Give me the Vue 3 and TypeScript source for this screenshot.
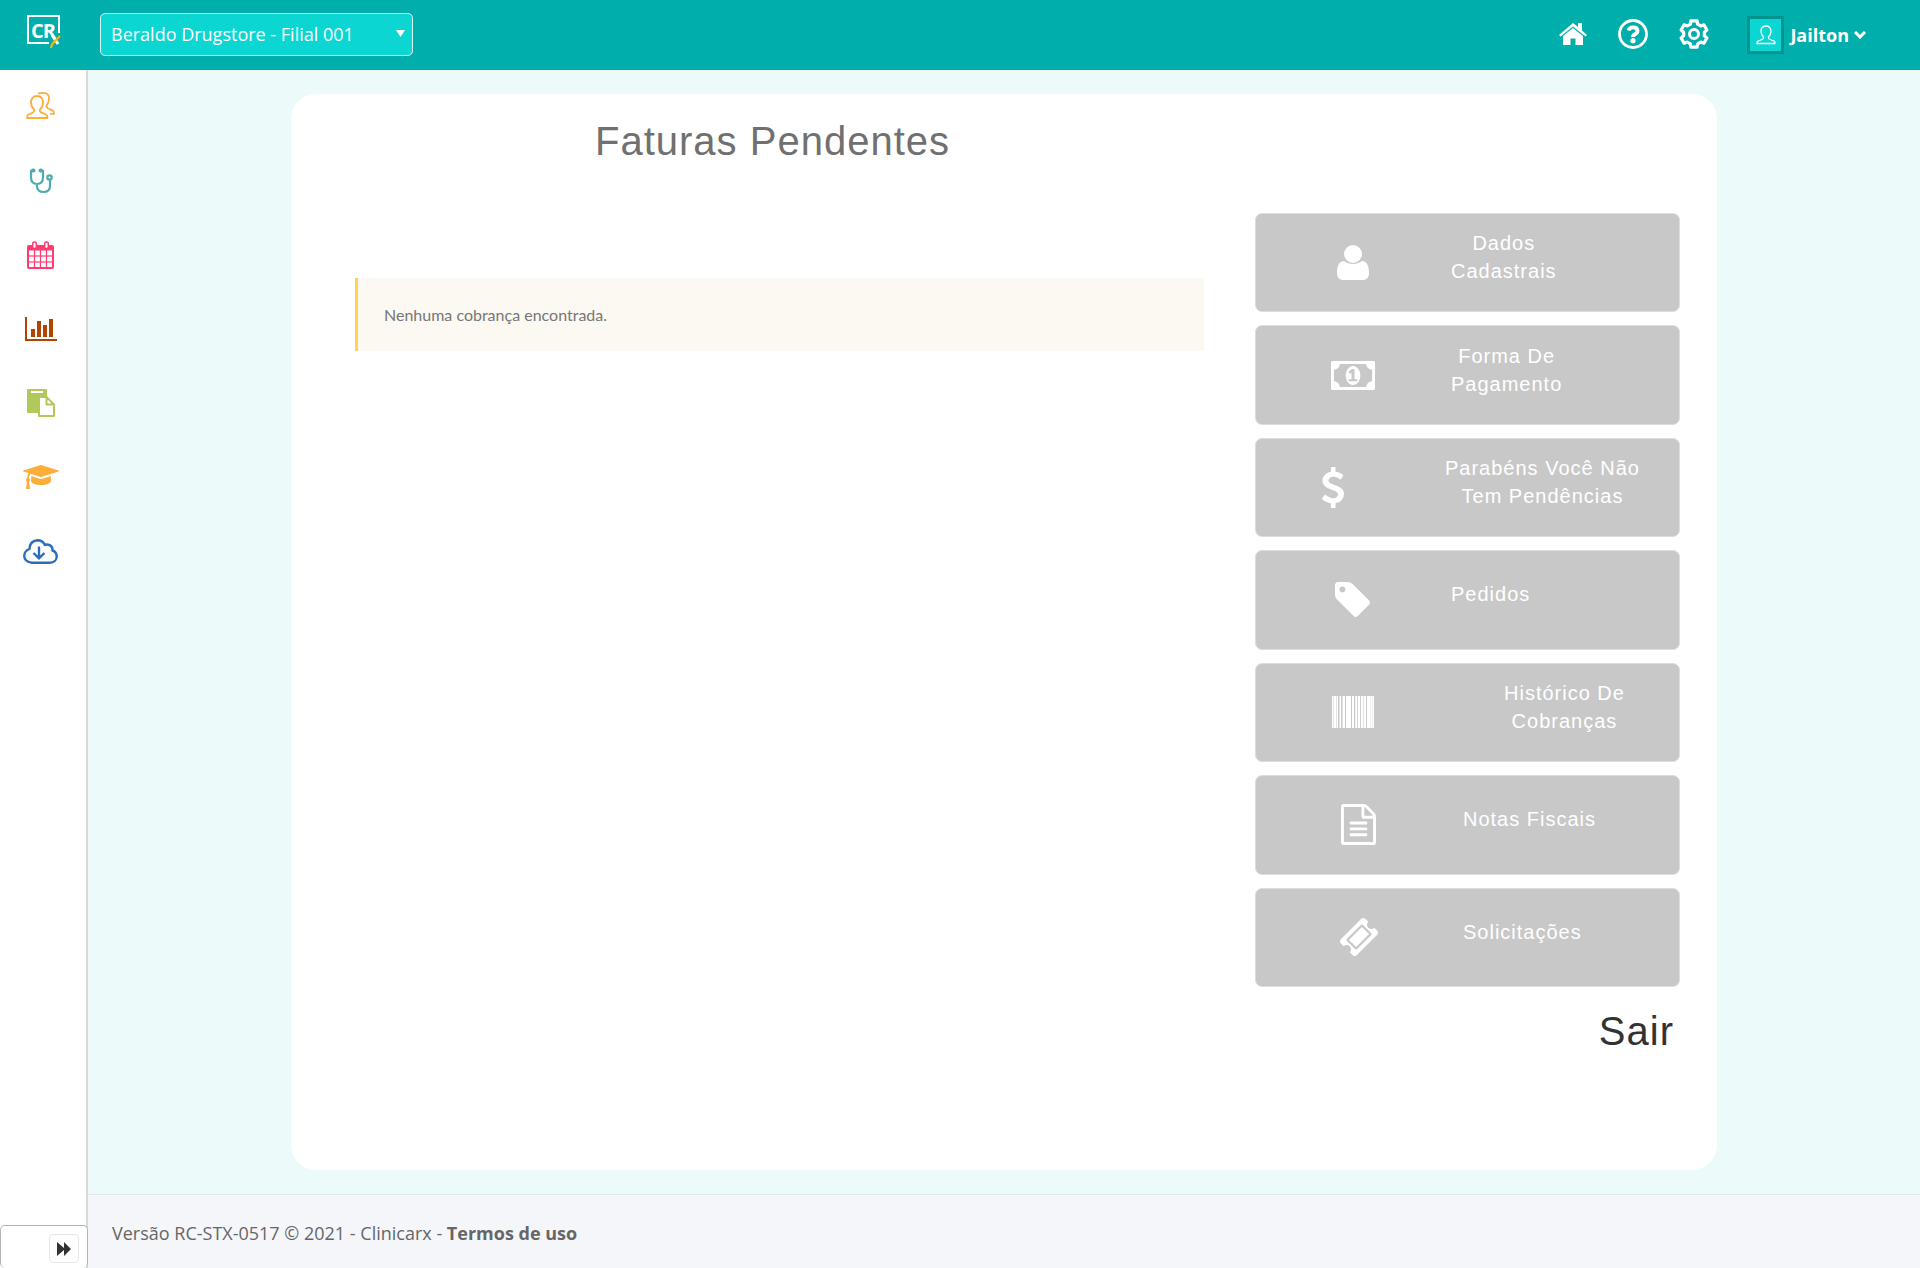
<script setup lang="ts">
import { ref } from 'vue'

interface MenuItem {
  id: string
  lines: string[]
  width: number
  height: number
  viewBox: string
  path: string
}

const branch = ref('Beraldo Drugstore - Filial 001')

const menu: MenuItem[] = [
  {
    id: 'dados', lines: ['Dados', 'Cadastrais'], width: 32, height: 35, viewBox: '0 0 32 35',
    path: 'M16 0a9 9 0 1 1 0 18a9 9 0 1 1 0-18zM7 16c5 4 13 4 18 0c5 0 7 5 7 12c0 4-2 7-6 7H6c-4 0-6-3-6-7c0-7 2-12 7-12z',
  },
  {
    id: 'forma', lines: ['Forma De', 'Pagamento'], width: 44, height: 29, viewBox: '-64 256 1920 1280',
    path: 'M704 1152h384v-96h-128v-448h-114l-148 137 77 80q42-37 55-57h2v288h-128v96zm512-256q0 70-21 142t-59.5 134-101.5 101-138 39-138-39-101.5-101-59.5-134-21-142 21-142 59.5-134 101.5-101 138-39 138 39 101.5 101 59.5 134 21 142zm512 256v-512q-106 0-181-75t-75-181h-1152q0 106-75 181t-181 75v512q106 0 181 75t75 181h1152q0-106 75-181t181-75zm128-832v1152q0 26-19 45t-45 19h-1792q-26 0-45-19t-19-45v-1152q0-26 19-45t45-19h1792q26 0 45 19t19 45z',
  },
  {
    id: 'pendencias', lines: ['Parabéns Você Não', 'Tem Pendências'], width: 22, height: 41, viewBox: '432 0 930 1792',
    path: 'M1362 1185q0 153-99.5 263.5t-258.5 136.5v175q0 14-9 23t-23 9h-135q-13 0-22.5-9.5t-9.5-22.5v-175q-66-9-127.5-31t-101.5-44.5-74-48-46.5-37.5-17.5-18q-17-21-2-41l103-135q7-10 23-12 15-2 24 9l2 2q113 99 243 125 37 8 74 8 81 0 142.5-43t61.5-122q0-28-15-53t-33.5-42-58.5-37.5-66-32-80-32.5q-39-16-61.5-25t-61.5-26.5-62.5-31-56.5-35.5-53.5-42.5-43.5-49-35.5-58-21-66.5-8.5-78q0-138 98-242t255-134v-180q0-13 9.5-22.5t22.5-9.5h135q14 0 23 9t9 23v176q57 6 110.5 23t87 33.5 63.5 37.5 39 29 15 14q17 18 5 38l-81 146q-8 15-23 16-14 3-27-7-3-3-14.5-12t-39-26.5-58.5-32-74.5-26-85.5-11.5q-95 0-155 43t-60 111q0 26 8.5 48t29.5 41.5 39.5 33 56 31 60.5 27 70 27.5q53 20 81 31.5t76 35 75.5 42.5 62 50 53 63.5 31.5 76.5 13 94z',
  },
  {
    id: 'pedidos', lines: ['Pedidos'], width: 35, height: 35, viewBox: '128 128 1516 1516',
    path: 'M576 448q0-53-37.5-90.5t-90.5-37.5-90.5 37.5-37.5 90.5 37.5 90.5 90.5 37.5 90.5-37.5 37.5-90.5zm1067 576q0 53-37 90l-491 492q-39 37-91 37-53 0-90-37l-715-716q-38-37-64.5-101t-26.5-117v-416q0-52 38-90t90-38h416q53 0 117 26.5t102 64.5l715 714q37 39 37 91z',
  },
  {
    id: 'historico', lines: ['Histórico De', 'Cobranças'], width: 42, height: 32, viewBox: '0 0 42 32',
    path: 'M0 0h1.500v32H0zM2 0h2v32H2zM4.500 0h1.500v32H4.500zM7.500 0h1.500v32H7.500zM10.500 0h2.500v32h-2.500zM14 0h5v32h-5zM20 0h2v32h-2zM23.200 0h2v32h-2zM26 0h2.200v32h-2.200zM29 0h2v32H29zM31.500 0h2.500v32h-2.500zM35 0h3.200v32h-3.200zM38.500 0h2v32h-2zM40.800 0h1.200v32h-1.200z',
  },
  {
    id: 'notas', lines: ['Notas Fiscais'], width: 35, height: 41, viewBox: '128 0 1536 1792',
    path: 'M1596 380q28 28 48 76t20 88v1152q0 40-28 68t-68 28h-1344q-40 0-68-28t-28-68v-1600q0-40 28-68t68-28h896q40 0 88 20t76 48zm-444-244v376h376q-10-29-22-41l-313-313q-12-12-41-22zm384 1528v-1024h-416q-40 0-68-28t-28-68v-416h-768v1536h1280zm-1024-864q0-14 9-23t23-9h704q14 0 23 9t9 23v64q0 14-9 23t-23 9h-704q-14 0-23-9t-9-23v-64zm736 224q14 0 23 9t9 23v64q0 14-9 23t-23 9h-704q-14 0-23-9t-9-23v-64q0-14 9-23t23-9h704zm0 256q14 0 23 9t9 23v64q0 14-9 23t-23 9h-704q-14 0-23-9t-9-23v-64q0-14 9-23t23-9h704z',
  },
  {
    id: 'solicitacoes', lines: ['Solicitações'], width: 38, height: 38, viewBox: '54 54 1684 1684',
    path: 'M1024 452l316 316-572 572-316-316zm-211 979l618-618q19-19 19-45t-19-45l-362-362q-18-18-45-18t-45 18l-618 618q-19 19-19 45t19 45l362 362q18 18 45 18t45-18zm889-637l-907 908q-37 37-90.5 37t-90.5-37l-126-125q56-56 56-136t-56-136-136-56-136 56l-125-126q-37-37-37-90.5t37-90.5l907-906q37-37 90.5-37t90.5 37l125 125q-56 56-56 136t56 136 136 56 136-56l126 125q37 37 37 90.5t-37 90.5z',
  },
]

// Outline of a six-toothed gear centred on the origin.
function gearOutline(teeth: number, outer: number, inner: number): string {
  const points: string[] = []
  for (let i = 0; i < teeth; i++) {
    const centre = (i * 360) / teeth - 90
    const corners: [number, number][] = [[-20, inner], [-13, outer], [13, outer], [20, inner]]
    for (const [offset, radius] of corners) {
      const a = ((centre + offset) * Math.PI) / 180
      points.push(`${(Math.cos(a) * radius).toFixed(2)} ${(Math.sin(a) * radius).toFixed(2)}`)
    }
  }
  return `M${points.join('L')}Z`
}
const gear = gearOutline(6, 13.5, 10.5)
</script>

<template>
  <div class="app">
    <header class="topbar">
      <a class="logo" href="#" aria-label="Clinicarx">
        <svg width="34" height="34" viewBox="0 0 34 34">
          <path d="M22 28H1V1H32V18" fill="none" stroke="#fff" stroke-width="2" />
          <text x="4" y="23" class="logo-text">CR</text>
          <path d="M25 20L31 29" stroke="#fff" stroke-width="3" />
          <path d="M33 21Q30 24 27 27T24 33" fill="none" stroke="#f5b317" stroke-width="2" />
        </svg>
      </a>
      <div class="branch">
        <select v-model="branch" aria-label="Filial">
          <option>Beraldo Drugstore - Filial 001</option>
        </select>
        <svg class="branch-arrow" width="9" height="7" viewBox="0 0 9 7"><path d="M0 0H9L4.500 7Z" fill="#fff" /></svg>
      </div>
      <nav class="actions" aria-label="Atalhos">
        <a href="#" aria-label="Início">
          <svg width="28" height="24" viewBox="0 0 28 24" fill="#fff">
            <path d="M14 1L19 5V1H23V8.500L28 13L26.500 14.500L14 4.500L1.500 14.500L0 13Z" />
            <path d="M14 6L24 14V23H16.500V16.500H11.500V23H4V14Z" />
          </svg>
        </a>
        <a href="#" aria-label="Ajuda">
          <svg width="30" height="30" viewBox="0 0 30 30" fill="none" stroke="#fff">
            <circle cx="15" cy="15" r="13.500" stroke-width="2.800" />
            <path d="M10.500 11.500Q11.500 8.300 15 8.300Q19.500 8.300 19.500 11.700Q19.500 14 17 15.200Q15 16.200 15 18" stroke-width="3.800" />
            <circle cx="15" cy="21.700" r="1.300" stroke-width="2.600" />
          </svg>
        </a>
        <a href="#" aria-label="Configurações">
          <svg width="30" height="30" viewBox="-15 -15 30 30" fill="none" stroke="#fff" stroke-linejoin="round">
            <path :d="gear" stroke-width="3.200" />
            <circle r="4.500" stroke-width="3" />
          </svg>
        </a>
      </nav>
      <button class="user" type="button">
        <span class="avatar">
          <svg width="20" height="20" viewBox="0 0 20 20" fill="none" stroke="#fff" stroke-width="1.300" stroke-linejoin="round">
            <path d="M10 1C6.500 1 5 3.500 5 6.500Q5.200 10 7.500 12Q8 13.500 6 14.500L2 16Q1 16.500 1 18.500H19Q19 16.500 18 16L14 14.500Q12 13.500 12.500 12Q14.800 10 15 6.500C15 3.500 13.500 1 10 1Z" />
          </svg>
        </span>
        <span class="name">Jailton</span>
        <svg width="12" height="8" viewBox="0 0 12 8" fill="none" stroke="#fff" stroke-width="3"><path d="M1 1L6 6L11 1" /></svg>
      </button>
    </header>

    <div class="body">
      <aside class="sidebar">
        <nav class="side-nav" aria-label="Principal">
          <a href="#" aria-label="Pacientes">
            <svg width="29" height="30" viewBox="0 1 29 30" fill="none" stroke="#fdae38" stroke-width="1.800" stroke-linejoin="round">
              <path d="M11 5C7 5 5 8 5 11.500Q5.200 16 8 18.500Q9 20.500 6.500 21.800L2.500 23.500Q1 24.200 1 27H21.500Q21.500 24.200 20 23.500L16 21.800Q13 20.500 14 18.500Q16.800 16 17 11.500C17 8 15 5 11 5Z" />
              <path d="M12 2.700Q14 1.900 17 1.900C21.500 1.900 23.500 4.500 23 8Q22.800 12 20.500 14.500Q20 16.500 22 17.500L26.500 19.300Q28 20 28 22.800H24" />
            </svg>
          </a>
          <a href="#" aria-label="Atendimentos">
            <svg width="24" height="26" viewBox="0 0 24 26" fill="none" stroke="#52aaad" stroke-width="2.200">
              <path d="M4 3H2V9Q2 16 8 16T14 9V3H12M8 16V18Q8 24 14.500 24T21 18V12" />
              <circle cx="20.500" cy="9.500" r="2.200" /><path d="M4 2.500H4.500M11.500 2.500H12" stroke-width="4" stroke-linecap="round" />
            </svg>
          </a>
          <a href="#" aria-label="Agenda">
            <svg width="27" height="28" viewBox="0 0 27 28" fill="none" stroke="#ff3c70">
              <rect x="1" y="5" width="25" height="22" rx="1" stroke-width="2" />
              <path d="M1 7H26" stroke-width="5" />
              <path d="M7.500 9V26M13.500 9V26M19.500 9V26" stroke-width="1.200" /><path d="M1 15H26M1 21H26" stroke-width="1.500" stroke-opacity=".8" />
              <rect x="5.700" y="1" width="3.600" height="6.500" rx="1.500" fill="#fff" stroke-width="1.500" />
              <rect x="17.700" y="1" width="3.600" height="6.500" rx="1.500" fill="#fff" stroke-width="1.500" />
            </svg>
          </a>
          <a href="#" aria-label="Relatórios">
            <svg width="32" height="24" viewBox="0 128 2048 1536" fill="#b34400"><path d="M640 896v512h-256v-512h256zm384-512v1024h-256v-1024h256zm1024 1152v128h-2048v-1536h128v1408h1920zm-640-896v768h-256v-768h256zm384-384v1152h-256v-1152h256z" /></svg>
          </a>
          <a href="#" aria-label="Documentos">
            <svg width="28" height="28" viewBox="0 0 28 28">
              <path d="M1 0H19Q20 0 20 1V24H1Q0 24 0 23V1Q0 0 1 0Z" fill="#b1c95b" /><path d="M4 2H16V4H4Z" fill="#fff" />
              <path d="M12 8H19.500L27 15.500V27H12ZM19.500 8V15.500H27" fill="#fff" stroke="#b1c95b" stroke-width="2" stroke-linejoin="round" />
            </svg>
          </a>
          <a href="#" aria-label="Educação">
            <svg width="36" height="24" viewBox="0 128 2304 1536" fill="#fdae38"><path d="M1774 836l18 316q4 69-82 128t-235 93.500-323 34.500-323-34.500-235-93.500-82-128l18-316 574 181q22 7 48 7t48-7zm530-324q0 23-22 31l-1120 352q-4 1-10 1t-10-1l-652-206q-43 34-71 111.500t-34 178.500q63 36 63 109 0 69-58 107l58 433q2 14-8 25-9 11-24 11h-192q-15 0-24-11-10-11-8-25l58-433q-58-38-58-107 0-73 65-111 11-207 98-330l-333-104q-22-8-22-31t22-31l1120-352q4-1 10-1t10 1l1120 352q22 8 22 31z" /></svg>
          </a>
          <a href="#" aria-label="Downloads">
            <svg width="35" height="25" viewBox="0 0 35 25" fill="none" stroke="#2b6dbb" stroke-width="2.400">
              <path d="M9 23.700H27C31 23.700 33.700 21 33.700 17.500Q33.700 13 29.500 11.500Q29.500 6 24.500 5.500Q23 5.300 22 6Q19.500 1.200 14.500 1.200Q6.500 2 6.500 10Q1.200 12 1.200 17Q1.500 23 9 23.700Z" stroke-linejoin="round" />
              <path d="M16 7.500V19M10.500 14L16 19.300L21.500 14" />
            </svg>
          </a>
        </nav>
        <div class="expander">
          <button type="button" aria-label="Expandir menu">
            <svg width="14" height="14" viewBox="0 0 14 14" fill="#333"><path d="M0 0L7 6V0L14 7L7 14V8L0 14Z" /></svg>
          </button>
        </div>
      </aside>

      <div class="main">
        <main class="content">
          <section class="panel">
            <div class="invoices">
              <h1>Faturas Pendentes</h1>
              <p class="notice">Nenhuma cobrança encontrada.</p>
            </div>
            <div class="side">
              <nav class="menu" aria-label="Financeiro">
                <button v-for="item in menu" :key="item.id" type="button" :class="['tile', item.id]">
                  <span class="tile-icon">
                    <svg :width="item.width" :height="item.height" :viewBox="item.viewBox" preserveAspectRatio="none" fill="#fff"><path :d="item.path" /></svg>
                  </span>
                  <span class="tile-label"><span v-for="line in item.lines" :key="line">{{ line }}</span></span>
                </button>
              </nav>
              <a class="exit" href="#">Sair</a>
            </div>
          </section>
        </main>
        <footer class="footer">Versão RC-STX-0517 © 2021 - Clinicarx -&nbsp;<a href="#">Termos de uso</a></footer>
      </div>
    </div>
  </div>
</template>

<style>
body { margin: 0; }
</style>

<style scoped>
* { box-sizing: border-box; }
.app { display: flex; flex-direction: column; min-height: 100vh; font-family: "Open Sans", sans-serif; font-size: 18px; }
a { color: inherit; text-decoration: none; }
svg { display: block; flex: none; }
button { font: inherit; cursor: pointer; }

.topbar { display: flex; align-items: center; height: 70px; padding: 0 54px 0 27px; background: #00aeac; color: #fff; }
.logo { width: 73px; padding-bottom: 6px; }
.logo-text { font-size: 20px; font-weight: 700; fill: #fff; letter-spacing: -1px; }
.branch { position: relative; width: 313px; padding-bottom: 2px; }
.branch select { display: block; width: 100%; height: 43px; padding: 0 10px; appearance: none; border: 1px solid #d5f6f5; border-radius: 5px; background: #0bd6d2; color: #fff; font: inherit; }
.branch-arrow { position: absolute; right: 8px; top: 17px; pointer-events: none; }
.actions { display: flex; align-items: center; gap: 31px; margin-left: auto; margin-right: 38px; padding-bottom: 2px; }
.user { display: flex; align-items: center; padding: 0; border: 0; background: none; color: #fff; font-weight: 700; }
.avatar { display: grid; place-items: center; width: 37px; height: 38px; margin-right: 6px; border: 3px solid #009490; background: #0bd6d2; }
.name { margin-right: 5px; }

.body { display: flex; flex: 1; }
.sidebar { display: flex; flex-direction: column; flex: none; width: 88px; border-right: 2px solid #d7d9d9; background: #fff; }
.side-nav a { display: flex; align-items: center; justify-content: center; height: 74px; padding-right: 5px; }
.expander { display: flex; justify-content: flex-end; margin: auto -2px 0 0; padding: 8px; height: 43px; border: 1px solid #b5b5b5; border-bottom: 0; border-radius: 5px; background: #fff; }
.expander button { display: grid; place-items: center; width: 30px; height: 29px; padding: 0; border: 1px solid #e8e8e8; border-radius: 4px; background: #fff; }

.main { display: flex; flex-direction: column; flex: 1; background: #edfafa; }
.content { display: flex; flex: 1; padding: 24px 203px; }
.panel { display: flex; flex: 1; gap: 51px; padding: 0 37px 0 64px; border-radius: 25px; background: #fff; }
.invoices { flex: 1; }
h1 { margin: 23px 14px 113px 0; font: 400 40px/48px "Liberation Sans", Arial, sans-serif; letter-spacing: 1px; text-align: center; color: #707070; }
.notice { margin: 0; padding: 24px 26px; border-left: 3px solid #ffd454; background: #fcf9f2; color: #777; font: 400 16px/25px Lato, sans-serif; }
.side { display: flex; flex-direction: column; flex: none; width: 425px; padding-top: 119px; font-family: "Liberation Sans", Arial, sans-serif; letter-spacing: 1px; }
.menu { display: grid; grid-auto-rows: 1fr; gap: 13px; height: 774px; }
.tile { display: flex; align-items: center; padding: 0; border: 1px solid #dedede; border-radius: 7px; background: #c8c8c8; color: #fff; font-size: 20px; line-height: 28px; letter-spacing: 1px; }
.tile-icon { display: flex; justify-content: center; width: 195px; padding-right: 2px; }
.tile-label { display: flex; flex-direction: column; align-items: center; padding-bottom: 11px; }
.pendencias .tile-icon { width: 155px; }
.pendencias .tile-label { margin-left: 34px; }
.historico .tile-label { margin-left: 53px; }
.notas .tile-icon, .solicitacoes .tile-icon { width: 207px; }
.exit { align-self: flex-end; margin: 20px 6px 0 0; font-size: 40px; line-height: 48px; color: #333; }

.footer { display: flex; align-items: center; height: 74px; padding: 3px 24px 0; border-top: 1px solid #dfe8ea; background: #f5f6fa; color: #666; }
.footer a { font-weight: 700; }
</style>
